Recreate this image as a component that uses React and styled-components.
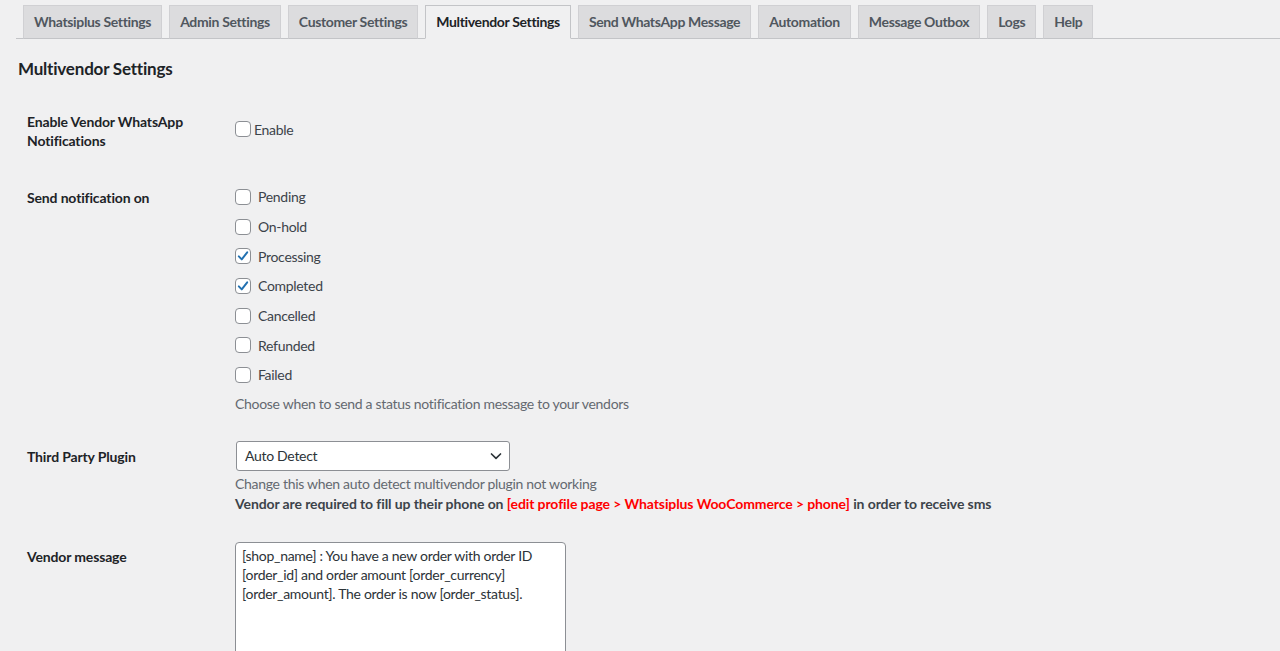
import React from "react";
import styled, { createGlobalStyle } from "styled-components";

const Global = createGlobalStyle`
  html, body { margin: 0; padding: 0; background: #f0f0f1; }
  body { font-family: Lato, "Open Sans", sans-serif; font-size: 14px; color: #3c434a; }
  * { box-sizing: border-box; }
`;

const Page = styled.div`
  padding: 5px 0 0 16px;
`;

const TabBar = styled.nav`
  display: flex;
  gap: 7px;
  padding-left: 7px;
  border-bottom: 1px solid #c3c4c7;
`;

const Tab = styled.a`
  display: block;
  padding: 0 10px;
  height: 34px;
  line-height: 32px;
  font-size: 14px;
  font-weight: 700;
  letter-spacing: -0.35px;
  text-decoration: none;
  white-space: nowrap;
  color: ${(p) => (p.$active ? "#1d2327" : "#50575e")};
  background: ${(p) => (p.$active ? "#f0f0f1" : "#dcdcde")};
  border: 1px solid ${(p) => (p.$active ? "#c3c4c7" : "#d0d0d3")};
  border-bottom-color: ${(p) => (p.$active ? "#f0f0f1" : "#c3c4c7")};
  margin-bottom: -1px;
`;

const Heading = styled.h2`
  margin: 18px 0 0 2px;
  font-size: 17px;
  line-height: 24px;
  font-weight: 700;
  letter-spacing: -0.2px;
  color: #1d2327;
`;

const Form = styled.div`
  padding-left: 11px;
`;

const Row = styled.div`
  display: grid;
  grid-template-columns: 208px 1fr;
  margin-top: ${(p) => p.$top}px;
`;

const Label = styled.div`
  font-weight: 700;
  font-size: 14px;
  line-height: 19px;
  letter-spacing: -0.15px;
  color: #1d2327;
  padding-top: ${(p) => p.$pad || 0}px;
`;

const Field = styled.div`
  display: flex;
  flex-direction: column;
  align-items: flex-start;
  letter-spacing: -0.3px;
`;

const CheckItem = styled.label`
  display: flex;
  align-items: center;
  gap: ${(p) => (p.$tight ? 3 : 7)}px;
  height: ${(p) => p.$h || 29.7}px;
  font-size: 14px;
  color: #3c434a;
`;

const Box = styled.span`
  width: 16px;
  height: 16px;
  border: 1px solid #8c8f94;
  border-radius: 4px;
  background: #fff;
  display: inline-flex;
  align-items: center;
  justify-content: center;
  flex: none;
`;

const Desc = styled.p`
  margin: ${(p) => p.$top || 0}px 0 0;
  font-size: 14px;
  line-height: 20px;
  color: #646970;
`;

const Strong = styled.p`
  margin: 0;
  font-size: 14px;
  line-height: 20px;
  font-weight: 700;
  letter-spacing: -0.1px;
  color: #3c434a;
`;

const Red = styled.span`
  color: #ff0000;
`;

const Select = styled.div`
  width: 274px;
  height: 30px;
  margin-left: 1px;
  border: 1px solid #8c8f94;
  border-radius: 3px;
  background: #fff;
  display: flex;
  align-items: center;
  justify-content: space-between;
  padding: 0 6px 0 8px;
  font-size: 14px;
  color: #2c3338;
`;

const TextArea = styled.div`
  width: 331px;
  height: 130px;
  border: 1px solid #8c8f94;
  border-radius: 4px;
  background: #fff;
  padding: 3px 6px;
  font-size: 14px;
  line-height: 19px;
  color: #2c3338;
`;

const Check = () => (
  <svg width="14" height="14" viewBox="0 0 20 20">
    <path d="M4 10.5 L8.2 14.8 L16 4.8" fill="none" stroke="#2271b1" strokeWidth="2.8" strokeLinecap="round" strokeLinejoin="round" />
  </svg>
);

const Chevron = () => (
  <svg width="14" height="14" viewBox="0 0 14 14">
    <path d="M2.5 5 L7 9.3 L11.5 5" fill="none" stroke="#2c3338" strokeWidth="1.7" strokeLinecap="round" strokeLinejoin="round" />
  </svg>
);

const tabs = [
  "Whatsiplus Settings",
  "Admin Settings",
  "Customer Settings",
  "Multivendor Settings",
  "Send WhatsApp Message",
  "Automation",
  "Message Outbox",
  "Logs",
  "Help",
];

const statuses = [
  ["Pending", false],
  ["On-hold", false],
  ["Processing", true],
  ["Completed", true],
  ["Cancelled", false],
  ["Refunded", false],
  ["Failed", false],
];

export default function App() {
  return (
    <Page>
      <Global />
      <TabBar>
        {tabs.map((t) => (
          <Tab key={t} $active={t === "Multivendor Settings"}>{t}</Tab>
        ))}
      </TabBar>
      <Heading>Multivendor Settings</Heading>
      <Form>
        <Row $top={31}>
          <Label>Enable Vendor WhatsApp<br />Notifications</Label>
          <Field>
            <CheckItem $tight $h={34}>
              <Box />
              Enable
            </CheckItem>
          </Field>
        </Row>
        <Row $top={32}>
          <Label $pad={5.5}>Send notification on</Label>
          <Field>
            {statuses.map(([s, c]) => (
              <CheckItem key={s}>
                <Box>{c && <Check />}</Box>
                {s}
              </CheckItem>
            ))}
            <Desc $top={4}>Choose when to send a status notification message to your vendors</Desc>
          </Field>
        </Row>
        <Row $top={27}>
          <Label $pad={6}>Third Party Plugin</Label>
          <Field>
            <Select>
              Auto Detect
              <Chevron />
            </Select>
            <Desc $top={3}>Change this when auto detect multivendor plugin not working</Desc>
            <Strong>
              Vendor are required to fill up their phone on <Red>[edit profile page &gt; Whatsiplus WooCommerce &gt; phone]</Red> in order to receive sms
            </Strong>
          </Field>
        </Row>
        <Row $top={28}>
          <Label $pad={5.5}>Vendor message</Label>
          <Field>
            <TextArea>
              [shop_name] : You have a new order with order ID [order_id] and order amount [order_currency] [order_amount]. The order is now [order_status].
            </TextArea>
          </Field>
        </Row>
      </Form>
    </Page>
  );
}
